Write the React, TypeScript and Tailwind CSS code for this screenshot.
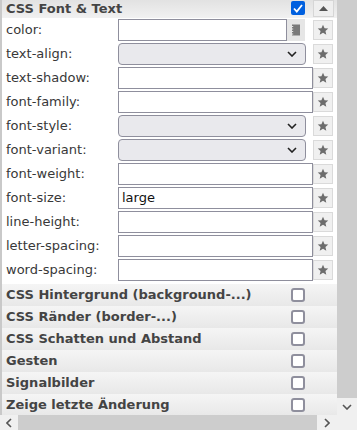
import React from "react";

type Kind = "text" | "select" | "color";

const rows: { label: string; kind: Kind; value?: string }[] = [
  { label: "color:", kind: "color" },
  { label: "text-align:", kind: "select" },
  { label: "text-shadow:", kind: "text" },
  { label: "font-family:", kind: "text" },
  { label: "font-style:", kind: "select" },
  { label: "font-variant:", kind: "select" },
  { label: "font-weight:", kind: "text" },
  { label: "font-size:", kind: "text", value: "large" },
  { label: "line-height:", kind: "text" },
  { label: "letter-spacing:", kind: "text" },
  { label: "word-spacing:", kind: "text" },
];

const sections = [
  "CSS Hintergrund (background-...)",
  "CSS Ränder (border-...)",
  "CSS Schatten und Abstand",
  "Gesten",
  "Signalbilder",
  "Zeige letzte Änderung",
];

function Star() {
  return (
    <svg width="12" height="12" viewBox="0 0 24 24">
      <path
        fill="#6d6d6d"
        d="M12 1.5l3.1 6.9 7.4.7-5.6 5 1.7 7.4L12 17.6l-6.6 3.9 1.7-7.4-5.6-5 7.4-.7z"
      />
    </svg>
  );
}

function StarButton() {
  return (
    <div className="flex h-[20px] w-[20px] items-center justify-center border border-[#dadada] bg-[#f0f0f0]">
      <Star />
    </div>
  );
}

function Chevron({ color = "#222" }: { color?: string }) {
  return (
    <svg width="10" height="6" viewBox="0 0 10 6">
      <path d="M1 1l4 4 4-4" fill="none" stroke={color} strokeWidth="1.6" />
    </svg>
  );
}

function Notepad() {
  return (
    <svg width="10" height="12" viewBox="0 0 10 12">
      <rect x="1" y="0.5" width="8" height="11" fill="#7a7a7a" />
      <rect x="1" y="2" width="1.2" height="1" fill="#e6e6e6" />
      <rect x="1" y="4.5" width="1.2" height="1" fill="#e6e6e6" />
      <rect x="1" y="7" width="1.2" height="1" fill="#e6e6e6" />
      <rect x="1" y="9.5" width="1.2" height="1" fill="#e6e6e6" />
    </svg>
  );
}

function Checkbox({ checked = false }: { checked?: boolean }) {
  if (checked) {
    return (
      <div className="flex h-[14px] w-[14px] items-center justify-center rounded-[2px] bg-[#0060df]">
        <svg width="10" height="9" viewBox="0 0 10 9">
          <path d="M1 4.5l2.8 3L9 1" fill="none" stroke="#fff" strokeWidth="1.8" />
        </svg>
      </div>
    );
  }
  return <div className="h-[14px] w-[14px] rounded-[3px] border-2 border-[#8f8f9d] bg-white" />;
}

function Control({ kind, value }: { kind: Kind; value?: string }) {
  if (kind === "select") {
    return (
      <div className="flex h-[22px] w-[188px] items-center justify-end rounded-[4px] border border-[#8f8f9d] bg-[#e9e9ed] pr-[8px]">
        <Chevron />
      </div>
    );
  }
  if (kind === "color") {
    return (
      <div className="flex w-[187px] items-center">
        <div className="h-[22px] w-[169px] border border-[#8f8f9d] bg-white" />
        <div className="flex h-[22px] w-[18px] items-center justify-center bg-[#e6e6e6]">
          <Notepad />
        </div>
      </div>
    );
  }
  return (
    <div className="flex h-[22px] w-[195px] items-center border border-[#8f8f9d] bg-white pl-[3px] text-[#111]">
      {value}
    </div>
  );
}

export default function App() {
  return (
    <div
      className="flex h-[430px] w-[357px] flex-col overflow-hidden bg-white text-[13px] text-[#383838]"
      style={{ fontFamily: '"DejaVu Sans", Verdana, sans-serif' }}
    >
      <div className="flex min-h-0 flex-1">
        <div className="flex w-[337px] flex-col overflow-hidden border-l-2 border-[#c9c9c9]">
          <div className="flex h-[18px] shrink-0 items-center bg-gradient-to-b from-[#e2e2e2] to-[#f1f1f1]">
            <div className="w-[289px] pl-[4px] font-bold text-[#444]">CSS Font &amp; Text</div>
            <div className="self-start pt-[1px]">
              <Checkbox checked />
            </div>
            <div className="ml-[8px] flex h-[17px] w-[21px] items-center justify-center self-start border border-[#d6d6d6] bg-[#efefef]">
              <svg width="9" height="5" viewBox="0 0 9 5">
                <path d="M0 5L4.5 0 9 5z" fill="#555" />
              </svg>
            </div>
          </div>

          <div className="flex shrink-0 flex-col pb-[2px]">
            {rows.map((r) => (
              <div key={r.label} className="flex h-[24px] items-center">
                <div className="w-[116px] pl-[4px]">{r.label}</div>
                <div className="flex w-[195px] items-center">
                  <Control kind={r.kind} value={r.value} />
                </div>
                <StarButton />
              </div>
            ))}
          </div>

          {sections.map((s) => (
            <div
              key={s}
              className="flex h-[22px] shrink-0 items-center bg-gradient-to-b from-[#f5f5f5] to-[#e8e8e8]"
            >
              <div className="w-[289px] whitespace-nowrap pl-[4px] font-bold text-[#444]">{s}</div>
              <Checkbox />
            </div>
          ))}
        </div>

        <div className="flex w-[20px] flex-col">
          <div className="flex-1 bg-[#cdcdcd]" />
          <div className="flex h-[17px] items-center justify-center bg-[#f0f0f0]">
            <Chevron color="#555" />
          </div>
        </div>
      </div>

      <div className="flex h-[15px] shrink-0 bg-[#f0f0f0]">
        <div className="flex w-[18px] items-center justify-center">
          <svg width="6" height="10" viewBox="0 0 6 10">
            <path d="M5 1L1 5l4 4" fill="none" stroke="#555" strokeWidth="1.6" />
          </svg>
        </div>
        <div className="w-[299px] bg-[#cdcdcd]" />
        <div className="flex w-[20px] items-center justify-center">
          <svg width="6" height="10" viewBox="0 0 6 10">
            <path d="M1 1l4 4-4 4" fill="none" stroke="#555" strokeWidth="1.6" />
          </svg>
        </div>
        <div className="flex-1" />
      </div>
    </div>
  );
}
